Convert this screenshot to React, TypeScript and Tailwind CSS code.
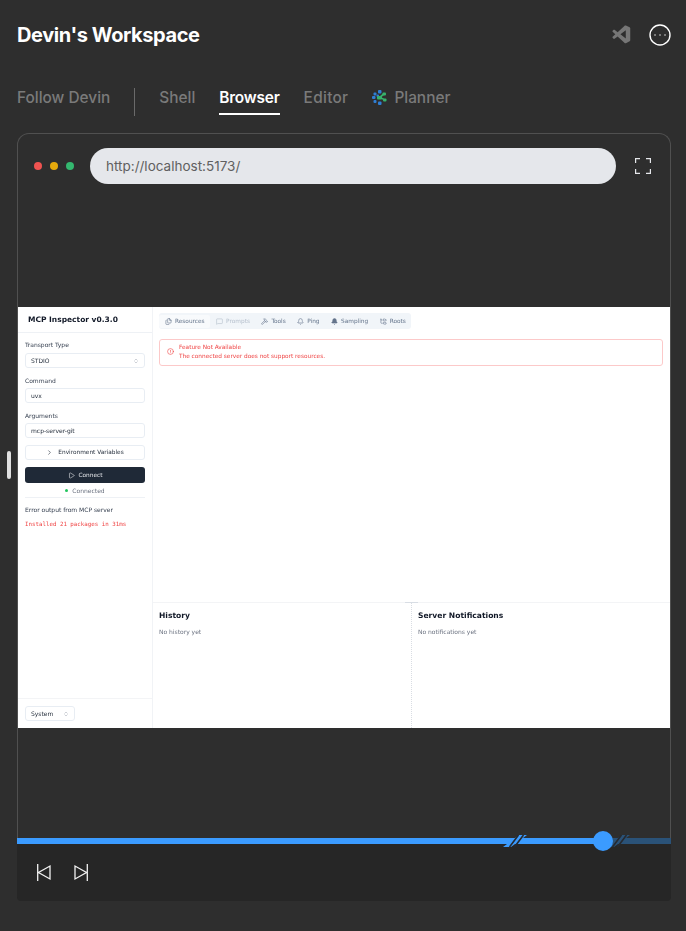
import { Bell, ChevronRight, ChevronsUpDown, CircleAlert, CircleEllipsis, Files, FolderTree, Hammer, MessageSquare, Play } from 'lucide-react'
import { VscVscode } from 'react-icons/vsc'

const inspectorTabs = [
  { name: 'Resources', icon: Files, active: true },
  { name: 'Prompts', icon: MessageSquare, muted: true },
  { name: 'Tools', icon: Hammer },
  { name: 'Ping', icon: Bell },
  { name: 'Sampling', icon: Bell, filled: true },
  { name: 'Roots', icon: FolderTree },
]

function PlannerIcon() {
  return (
    <svg width="15" height="15" viewBox="0 0 15 15">
      <g fill="#2f7fd6">
        <rect x="6" y="0" width="3.5" height="3.5" rx="1" />
        <rect x="1.5" y="2.5" width="3" height="3" rx="1" />
        <rect x="0" y="6" width="3.5" height="3" rx="1" />
        <rect x="1.5" y="10" width="3" height="3" rx="1" />
        <rect x="6" y="11.5" width="3.5" height="3.5" rx="1" />
        <rect x="4.5" y="4.5" width="2.5" height="2.5" rx="1" />
      </g>
      <g fill="#37b26c">
        <rect x="10.5" y="2.5" width="3.5" height="3" rx="1" />
        <rect x="5" y="6" width="5" height="3.5" rx="1" />
        <rect x="11" y="8.5" width="3.5" height="3" rx="1" />
        <path d="M8 6 11 3.5l1 1.5-3 2.5zM8.5 7l3.5 1.5-.5 1.5L8 8.5z" />
      </g>
    </svg>
  )
}

function SliderBreak({ color }: { color: string }) {
  return (
    <svg width="24" height="12" viewBox="0 0 24 12" className="absolute top-[-3px]">
      <path d="M0 12h8L24 0h-8z" fill={color} />
      <path d="M6.5 12 15.5 0M11.5 12 20.5 0" stroke="#262a30" strokeWidth="1.6" />
    </svg>
  )
}

function Field({ label, value }: { label: string; value: string }) {
  return (
    <div className="mt-[8px]">
      <div className="h-[9px] text-[6px] leading-[9px] text-[#374151]">{label}</div>
      <div className="mt-[3px] flex h-[15px] items-center rounded-[3px] border border-[#e8edf3] px-[5px] text-[6px] text-[#1f2937]">
        {value}
      </div>
    </div>
  )
}

function InspectorShot() {
  return (
    <div className="h-[421px] overflow-hidden bg-white">
      {/* the reference is a scaled down capture, hence the slight blur */}
      <div className="flex h-full blur-[0.4px] font-['DejaVu_Sans',sans-serif]">
        {/* sidebar */}
        <div className="flex w-[135px] shrink-0 flex-col border-r border-[#f1f3f6]">
          <div className="flex h-[26px] items-center border-b border-[#eef1f5] pl-[10px] text-[7.5px] font-bold text-[#111827]">
            MCP Inspector v0.3.0
          </div>
          <div className="flex-1 px-[7px] pt-[7px]">
            <div className="h-[9px] text-[6px] leading-[9px] text-[#374151]">Transport Type</div>
            <div className="mt-[4px] flex h-[15px] items-center justify-between rounded-[3px] border border-[#e8edf3] px-[5px] text-[6px] text-[#1f2937]">
              STDIO
              <ChevronsUpDown size={6} className="text-[#9ca3af]" />
            </div>
            <Field label="Command" value="uvx" />
            <Field label="Arguments" value="mcp-server-git" />
            <div className="mt-[7px] flex h-[15px] items-center justify-center gap-[5px] rounded-[3px] border border-[#e8edf3] text-[5.8px] text-[#1f2937]">
              <ChevronRight size={7} />
              Environment Variables
            </div>
            <div className="mt-[7px] flex h-[16px] items-center justify-center gap-[4px] rounded-[3px] bg-[#1f2937] text-[5.8px] text-[#e5e7eb]">
              <Play size={7} />
              Connect
            </div>
            <div className="mt-[4px] flex h-[7px] items-center justify-center gap-[4px] text-[6px] text-[#6b7280]">
              <span className="h-[3px] w-[3px] rounded-full bg-[#22c55e]" />
              Connected
            </div>
            <div className="mt-[3px] border-t border-[#eef1f5]" />
            <div className="mt-[7px] text-[6px] leading-[9px] text-[#374151]">Error output from MCP server</div>
            <div className="mt-[6px] font-['DejaVu_Sans_Mono',monospace] text-[5.8px] leading-[9px] text-[#ef4444]">
              Installed 21 packages in 31ms
            </div>
          </div>
          <div className="flex h-[30px] items-center border-t border-[#f3f4f6] px-[7px]">
            <div className="flex h-[15px] w-[50px] items-center justify-between rounded-[3px] border border-[#e8edf3] px-[5px] text-[6px] text-[#1f2937]">
              System
              <ChevronsUpDown size={6} className="text-[#9ca3af]" />
            </div>
          </div>
        </div>

        {/* main */}
        <div className="flex min-w-0 flex-1 flex-col">
          <div className="h-[295px] pl-[6px] pr-[7px] pt-[6px]">
            <div className="flex h-[16px] w-[252px] items-center rounded-[3px] bg-[#f1f5f9] pl-[0.25px] text-[5.8px] text-[#64748b]">
              {inspectorTabs.map(t => (
                <div
                  key={t.name}
                  className={`flex h-[13px] items-center gap-[3px] rounded-[2px] px-[5.75px] ${t.active ? 'bg-[#f8fafc]' : ''} ${t.muted ? 'text-[#b5bfcc]' : ''}`}
                >
                  <t.icon size={7} fill={t.filled ? 'currentColor' : 'none'} />
                  {t.name}
                </div>
              ))}
            </div>
            <div className="mt-[10px] flex h-[27px] items-center gap-[5px] rounded-[3px] border border-[#fcc9c9] pb-[2px] pl-[7px] text-[5.8px] leading-[9px] text-[#ef4444]">
              <CircleAlert size={7} />
              <div>
                <div>Feature Not Available</div>
                <div>The connected server does not support resources.</div>
              </div>
            </div>
          </div>
          <div className="relative flex flex-1 border-t border-[#f3f4f6]">
            <div className="absolute left-[252px] top-[-1px] h-px w-[13px] bg-[#d8dde4]" />
            <div className="w-[259px] border-r border-dotted border-[#d9dde3] px-[6px] pt-[7px]">
              <div className="text-[7.6px] font-bold leading-[11px] text-[#111827]">History</div>
              <div className="mt-[6px] text-[6px] leading-[9px] text-[#6b7280]">No history yet</div>
            </div>
            <div className="flex-1 px-[6px] pt-[7px]">
              <div className="text-[7.6px] font-bold leading-[11px] text-[#111827]">Server Notifications</div>
              <div className="mt-[6px] text-[6px] leading-[9px] text-[#6b7280]">No notifications yet</div>
            </div>
          </div>
        </div>
      </div>
    </div>
  )
}

export default function App() {
  return (
    <div className="relative h-[931px] w-[686px] overflow-hidden bg-[#2e2e2e] font-['Inter',sans-serif]">
      {/* resize handle */}
      <div className="absolute left-[7px] top-[451px] h-[28px] w-[4px] rounded-full bg-[#e0e0e0]" />

      <div className="flex h-[70px] items-center justify-between pl-[17px] pr-[14px]">
        <h1 className="text-[20px] font-bold tracking-[-0.4px] text-white">Devin's Workspace</h1>
        <div className="flex items-center gap-[15px]">
          <VscVscode size={22} className="text-[#767676]" />
          <CircleEllipsis size={24} strokeWidth={1.4} className="text-white" />
        </div>
      </div>

      <div className="flex h-[55px] items-center pl-[17px] text-[15.4px] font-medium text-[#7a7a7a]">
        <span>Follow Devin</span>
        <div className="ml-[24px] mt-[8px] h-[28px] w-px bg-[#6a6a6a]" />
        <div className="ml-[24px]">Shell</div>
        <div className="relative ml-[24px] font-semibold tracking-[-0.2px] text-white">
          Browser
          <div className="absolute inset-x-0 top-[27px] h-[2px] bg-white" />
        </div>
        <div className="ml-[24px] tracking-[0.3px]">Editor</div>
        <div className="ml-[24px] flex items-center gap-[7px]">
          <PlannerIcon />
          Planner
        </div>
      </div>

      <div className="ml-[17px] mt-[8px] w-[654px]">
        <div className="h-[705px] overflow-hidden rounded-t-xl border-x border-t border-[#505050]">
          <div className="flex h-[173px] items-start pl-[16px] pt-[14px]">
            <div className="flex h-[36px] items-center gap-[8px]">
              <span className="h-[8px] w-[8px] rounded-full bg-[#ef5350]" />
              <span className="h-[8px] w-[8px] rounded-full bg-[#e5a90c]" />
              <span className="h-[8px] w-[8px] rounded-full bg-[#34b86f]" />
            </div>
            <div className="ml-[16px] flex h-[36px] w-[526px] items-center rounded-full bg-[#e5e7eb] px-[16px] text-[13.5px] text-[#606060]">
              http://localhost:5173/
            </div>
            <svg width="16" height="16" viewBox="0 0 16 16" className="ml-[19px] mt-[10px]" fill="none" stroke="#e5e7eb" strokeWidth="1.2">
              <path d="M.6 5V.6H5M11 .6h4.4V5M15.4 11v4.4H11M5 15.4H.6V11" />
            </svg>
          </div>
          <InspectorShot />
        </div>

        {/* timeline */}
        <div className="relative h-[6px] bg-[#2a5278]">
          <div className="h-full w-[586px] bg-[#3b9bff]" />
          <div className="absolute left-[486px] top-0"><SliderBreak color="#3b9bff" /></div>
          <div className="absolute left-[589px] top-0"><SliderBreak color="#2a5278" /></div>
          <div className="absolute left-[576px] top-[-7px] h-[20px] w-[20px] rounded-full bg-[#3b9bff]" />
        </div>

        <div className="flex h-[57px] items-center gap-[23px] rounded-b-[4px] bg-[#262626] pl-[20px]">
          <svg width="14" height="17" viewBox="0 0 14 17" fill="none" stroke="#f2f2f2" strokeWidth="1.3">
            <path d="M.7 0v17M13 2v13L1.5 8.5z" />
          </svg>
          <svg width="14" height="17" viewBox="0 0 14 17" fill="none" stroke="#f2f2f2" strokeWidth="1.3">
            <path d="M13.3 0v17M1 2v13L12.5 8.5z" />
          </svg>
        </div>
      </div>
    </div>
  )
}
